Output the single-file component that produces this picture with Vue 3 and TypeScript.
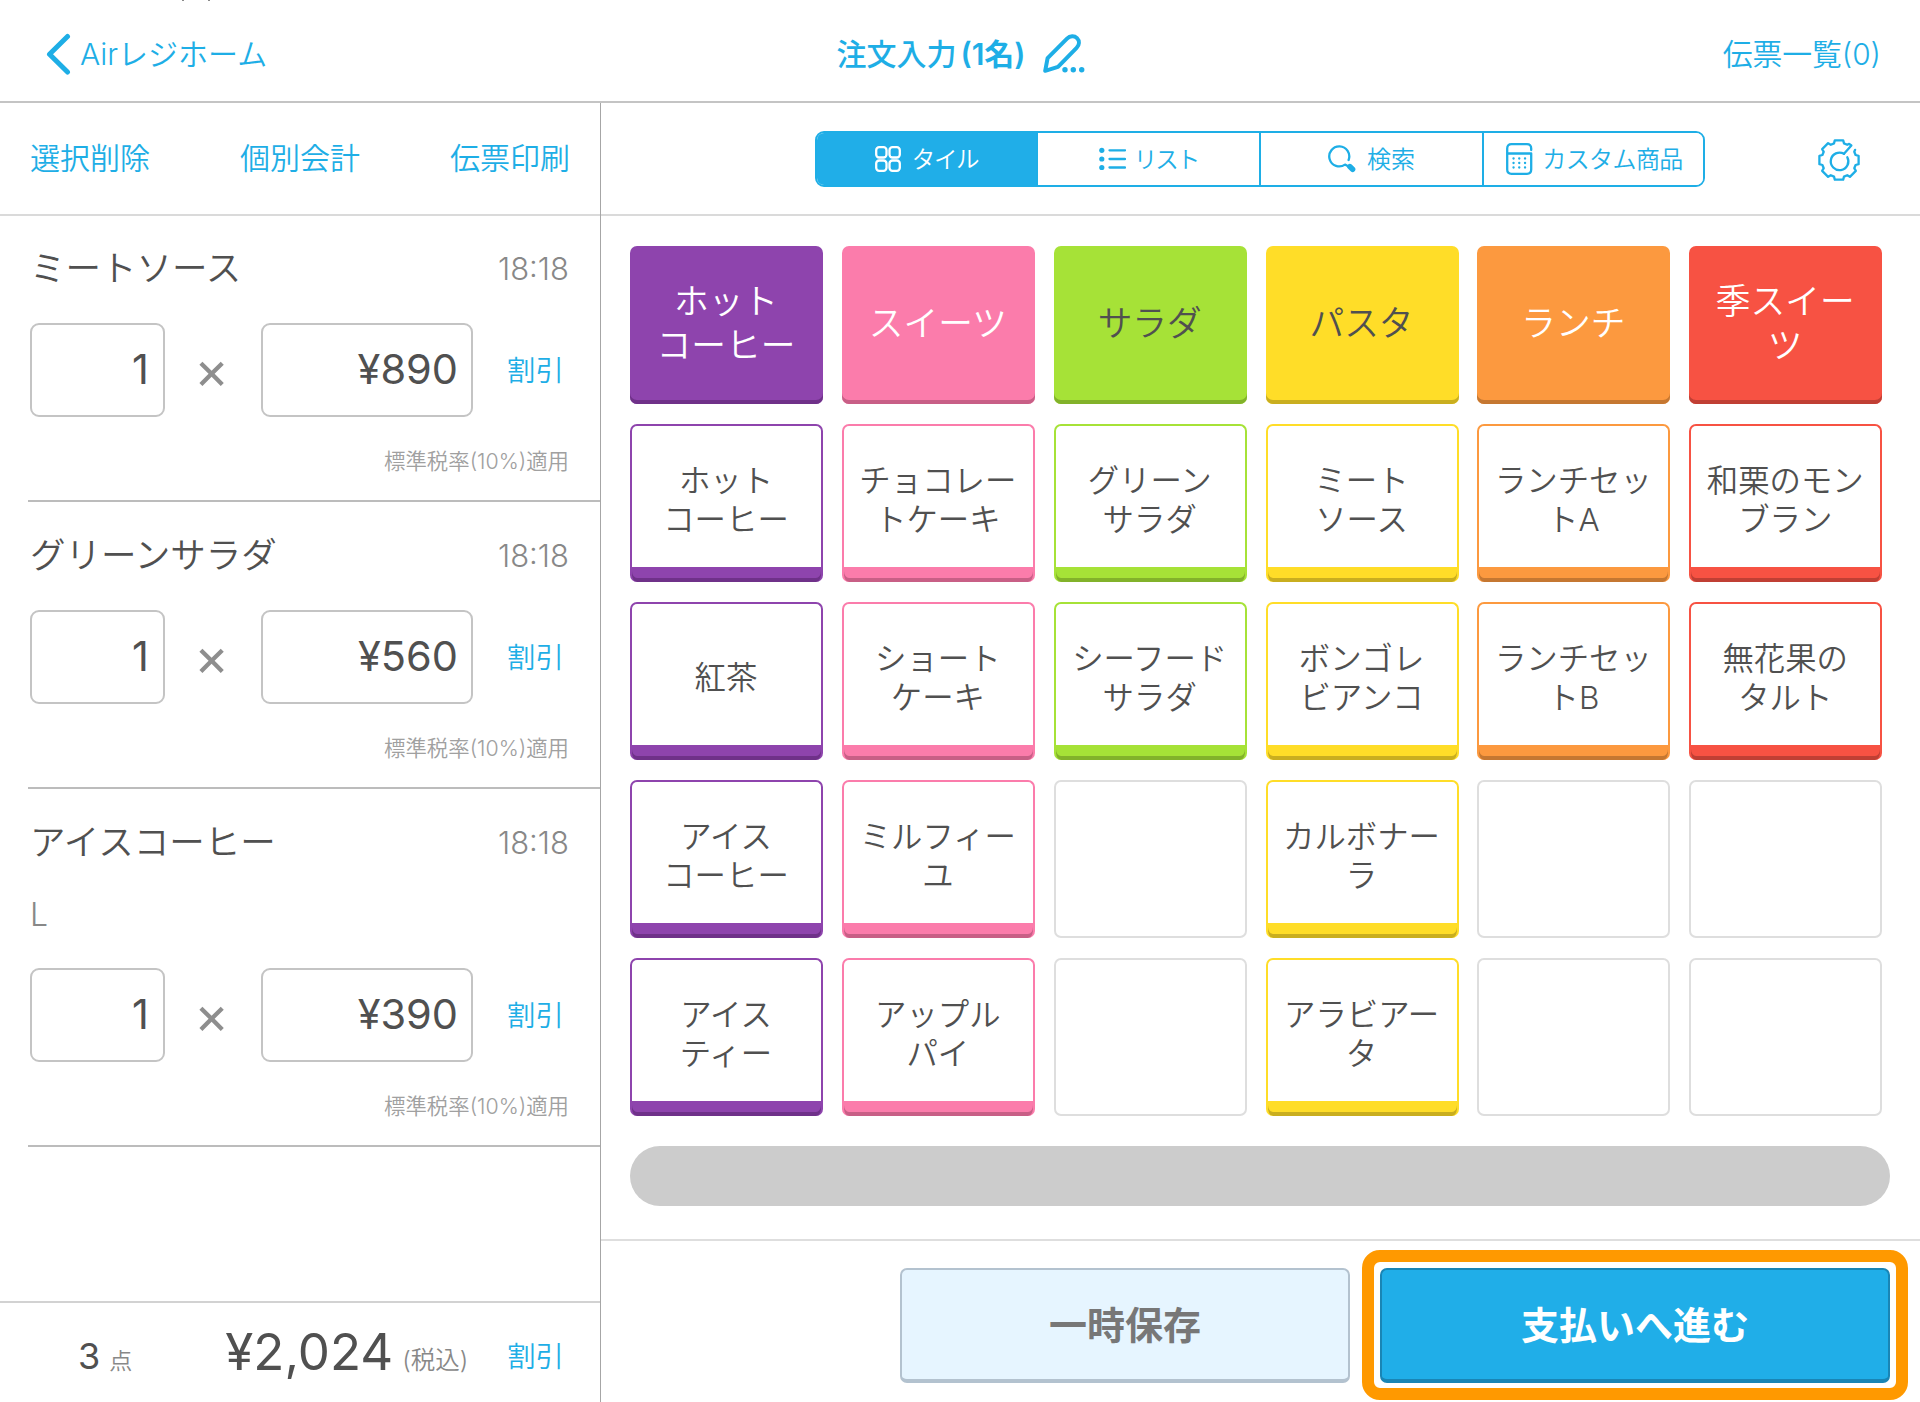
<script setup lang="ts">
interface OrderLine {
  name: string
  time: string
  option?: string
  qty: number
  price: string
}

interface Category {
  color: string
  edge: string
  text: string
  title: string[]
  items: string[][]
}

const orderLines: OrderLine[] = [
  { name: 'ミートソース', time: '18:18', qty: 1, price: '¥890' },
  { name: 'グリーンサラダ', time: '18:18', qty: 1, price: '¥560' },
  { name: 'アイスコーヒー', time: '18:18', option: 'L', qty: 1, price: '¥390' },
]

const categories: Category[] = [
  { color: '#8e44ad', edge: '#6f3189', text: '#fff', title: ['ホット', 'コーヒー'], items: [['ホット', 'コーヒー'], ['紅茶'], ['アイス', 'コーヒー'], ['アイス', 'ティー']] },
  { color: '#fb7cab', edge: '#c85f86', text: '#fff', title: ['スイーツ'], items: [['チョコレー', 'トケーキ'], ['ショート', 'ケーキ'], ['ミルフィー', 'ユ'], ['アップル', 'パイ']] },
  { color: '#a6e237', edge: '#82b22a', text: '#505050', title: ['サラダ'], items: [['グリーン', 'サラダ'], ['シーフード', 'サラダ'], [], []] },
  { color: '#ffdd28', edge: '#c9ae1f', text: '#505050', title: ['パスタ'], items: [['ミート', 'ソース'], ['ボンゴレ', 'ビアンコ'], ['カルボナー', 'ラ'], ['アラビアー', 'タ']] },
  { color: '#fc993f', edge: '#c57731', text: '#fff', title: ['ランチ'], items: [['ランチセッ', 'トA'], ['ランチセッ', 'トB'], [], []] },
  { color: '#f75243', edge: '#c03f34', text: '#fff', title: ['季スイー', 'ツ'], items: [['和栗のモン', 'ブラン'], ['無花果の', 'タルト'], [], []] },
]

const rows = [0, 1, 2, 3]

// Eight-tooth gear, left open at the upper-right tooth where the pointer enters.
function gearPoint(tooth: number, across: number, radius: number): string {
  const a = (tooth * Math.PI) / 4
  const x = 21 + across * Math.cos(a) + radius * Math.sin(a)
  const y = 21 + across * Math.sin(a) - radius * Math.cos(a)
  return `${x.toFixed(2)} ${y.toFixed(2)}`
}

const gearPoints: string[] = [gearPoint(1, 4.2, 18.6), gearPoint(1, 5, 16.6)]
for (let t = 2; t <= 8; t++) {
  gearPoints.push(gearPoint(t, -5, 16.6), gearPoint(t, -4.2, 19.6), gearPoint(t, 4.2, 19.6), gearPoint(t, 5, 16.6))
}
gearPoints.push(gearPoint(1, -5, 16.6), gearPoint(1, -4.2, 18.6), gearPoint(1, -1.5, 19))
const gearPath = `M${gearPoints.join('L')}L26 14.8`
</script>

<template>
  <div class="screen">
    <header class="topbar">
      <a class="back">
        <svg width="26" height="44" viewBox="0 0 26 44"><path d="M22.5 4.5 4.5 22.2 22.5 40" /></svg>
        <span>Airレジホーム</span>
      </a>
      <div class="title">
        <h1>注文入力<span class="count">(1名)</span></h1>
        <svg width="42" height="40" viewBox="0 0 42 40">
          <path d="M2.2 36.8 4.6 24.2 24 4.6c3-3 7.4-3 10-.4s2.6 6.6-.4 9.6L15 32.8Z" />
          <circle cx="22" cy="35.7" r="2.7" /><circle cx="30.3" cy="35.7" r="2.7" /><circle cx="38.7" cy="35.7" r="2.7" />
        </svg>
      </div>
      <a class="slips">伝票一覧(0)</a>
      <i class="tick"></i>
    </header>

    <div class="body">
      <aside class="order">
        <nav class="actions"><a>選択削除</a><a>個別会計</a><a>伝票印刷</a></nav>
        <section class="lines">
          <article v-for="line in orderLines" :key="line.name" class="line">
            <div class="line-head"><span class="name">{{ line.name }}</span><span class="time">{{ line.time }}</span></div>
            <div v-if="line.option" class="option">{{ line.option }}</div>
            <div class="line-values">
              <span class="field qty">{{ line.qty }}</span>
              <span class="times">×</span>
              <span class="field price">{{ line.price }}</span>
              <a class="discount">割引</a>
            </div>
            <div class="tax">標準税率(10%)適用</div>
          </article>
        </section>
        <footer class="total">
          <span class="num">3</span><span class="unit">点</span>
          <span class="sum">¥2,024</span><span class="incl">(税込)</span>
          <a class="discount">割引</a>
        </footer>
      </aside>

      <main class="catalog">
        <div class="toolbar">
          <div class="segments">
            <button class="seg active">
              <svg width="26" height="26" viewBox="0 0 26 26">
                <rect x="1.2" y="1.2" width="10.3" height="10.3" rx="3" /><rect x="14.5" y="1.2" width="10.3" height="10.3" rx="3" />
                <rect x="1.2" y="14.5" width="10.3" height="10.3" rx="3" /><rect x="14.5" y="14.5" width="10.3" height="10.3" rx="3" />
              </svg>
              <span>タイル</span>
            </button>
            <button class="seg list">
              <svg width="27" height="24" viewBox="0 0 27 24">
                <path d="M10.5 3.3H26M10.5 12H26M10.5 20.5H26" />
                <g class="fill"><circle cx="2.8" cy="3.3" r="2.6" /><circle cx="2.8" cy="12" r="2.6" /><circle cx="2.8" cy="20.5" r="2.6" /></g>
              </svg>
              <span>リスト</span>
            </button>
            <button class="seg">
              <svg width="28" height="28" viewBox="0 0 28 28">
                <path d="M20.6 15A10 10 0 1 0 17 19.6L20 21.3" />
                <path d="M21.8 21.6 24.6 24.3" class="grip" />
              </svg>
              <span>検索</span>
            </button>
            <button class="seg custom">
              <svg width="27" height="32" viewBox="0 0 27 32">
                <path d="M25.2 7V5.5Q25.2 1.2 21 1.2H5.5Q1.2 1.2 1.2 5.5V26.5Q1.2 30.8 5.5 30.8H21Q25.2 30.8 25.2 26.5V10.5H1.2" />
                <path d="M7.5 15.5h.1M13.2 15.5h.1M19 15.5h.1M7.5 20h.1M13.2 20h.1M19 20h.1M7.5 24.5h.1M13.2 24.5h.1M19 24.5h.1" />
              </svg>
              <span>カスタム商品</span>
            </button>
          </div>
          <svg class="gear" width="42" height="42" viewBox="0 0 42 42">
            <path :d="gearPath" />
            <path d="M29.3 18.2A8.8 8.8 0 1 1 26 14.8" />
          </svg>
        </div>

        <div class="grid">
          <div v-for="cat in categories" :key="'c' + cat.color" class="tile category" :style="{ '--c': cat.color, '--e': cat.edge, color: cat.text }">
            <span v-for="part in cat.title" :key="part">{{ part }}</span>
          </div>
          <template v-for="row in rows" :key="row">
            <div
              v-for="cat in categories"
              :key="cat.color + row"
              class="tile"
              :class="cat.items[row].length ? 'item' : 'empty'"
              :style="{ '--c': cat.color, '--e': cat.edge }"
            >
              <span v-for="part in cat.items[row]" :key="part">{{ part }}</span>
            </div>
          </template>
        </div>
        <div class="scrollbar"></div>

        <footer class="checkout">
          <button class="btn save">一時保存</button>
          <div class="focus"><button class="btn pay">支払いへ進む</button></div>
        </footer>
      </main>
    </div>
  </div>
</template>

<style>
body { margin: 0; background: #fff; }
</style>

<style scoped>
* { box-sizing: border-box; }
.screen {
  width: 1920px;
  height: 1402px;
  overflow: hidden;
  display: flex;
  flex-direction: column;
  background: #fff;
  color: #505050;
  font-family: Inter, "Noto Sans CJK JP", sans-serif;
  font-weight: 350;
  line-height: 1;
  white-space: nowrap;
}
svg { flex: none; fill: none; stroke: currentColor; stroke-width: 2.3; stroke-linecap: round; stroke-linejoin: round; }
a { color: #1eaee6; }
button { font: inherit; padding: 0; margin: 0; }

.topbar {
  position: relative;
  flex: none;
  height: 103px;
  padding: 6px 39px 0 45px;
  display: grid;
  grid-template-columns: 1fr auto 1fr;
  align-items: center;
  border-bottom: 2px solid #c4c4c4;
  font-size: 30px;
  color: #1eaee6;
}
.tick { position: absolute; left: 182px; top: 0; width: 28px; height: 1px; border: solid #8a8a8a; border-width: 0 2px; }
.back { display: flex; align-items: center; gap: 9px; }
.back svg { stroke-width: 5; }
.title { display: flex; align-items: center; gap: 17px; margin-right: 5px; }
.title h1 { margin: 0; padding-top: 1px; font-size: 30px; font-weight: 500; }
.title .count { margin-left: 4px; font-weight: 600; }
.title svg { stroke-width: 4; }
.title circle { fill: currentColor; stroke: none; }
.slips { justify-self: end; padding-top: 2px; font-size: 29.8px; }

.body { flex: 1; display: flex; min-height: 0; }
.order { width: 601px; flex: none; display: flex; flex-direction: column; border-right: 1px solid #a6a6a6; }
.actions {
  height: 113px;
  flex: none;
  padding: 0 30px 1px 30px;
  display: flex;
  align-items: center;
  justify-content: space-between;
  border-bottom: 2px solid #dadada;
  font-size: 30px;
}
.lines { flex: 1; padding-left: 28px; }
.line { height: 287px; padding: 32px 31px 0 2px; border-bottom: 2px solid #bcbcbc; }
.line:first-child { height: 286px; padding-top: 31px; }
.line:last-child { height: 358px; }
.line-head { display: flex; justify-content: space-between; align-items: center; height: 42px; }
.name { font-size: 35.5px; padding-top: 1px; }
.time { font-size: 31px; color: #888; }
.option { height: 71px; padding-top: 36px; font-size: 32px; color: #888; }
.line-values { display: flex; align-items: center; margin-top: 34px; height: 94px; }
.field {
  height: 94px;
  display: flex;
  align-items: center;
  justify-content: flex-end;
  border: 2px solid #c4c4c4;
  border-radius: 9px;
  font-size: 41.5px;
  font-weight: 370;
  padding: 0 13px 0 0;
}
.qty { width: 135px; padding-right: 14px; }
.price { width: 212px; }
.times { width: 96px; text-align: center; font-size: 53px; font-weight: 400; color: #8e8e8e; padding: 0 3px 0 0; }
.discount { font-size: 28.4px; }
.line-values .discount { margin-left: 34px; padding-top: 2px; }
.tax { margin-top: 33px; font-size: 21.4px; line-height: 22px; text-align: right; color: #a0a0a0; }

.total { height: 101px; flex: none; border-top: 2px solid #d2d2d2; display: flex; align-items: baseline; padding: 0 36px 0 78px; line-height: 99px; }
.num { font-size: 36px; line-height: 97px; font-weight: 370; }
.unit { margin-left: 9px; font-size: 23px; color: #888; }
.sum { margin-left: 93px; font-size: 51px; font-weight: 370; }
.incl { margin-left: 9px; font-size: 24.5px; color: #888; }
.num, .unit, .incl { position: relative; top: -2px; }
.sum { position: relative; top: -1px; }
.total .discount { margin-left: auto; position: relative; top: -4px; }

.catalog { flex: 1; display: flex; flex-direction: column; }
.toolbar { height: 113px; flex: none; border-bottom: 2px solid #dadada; display: flex; align-items: center; padding: 1px 60px 0 214px; justify-content: space-between; color: #1eaee6; }
.gear { margin-top: 1px; }
.segments { width: 890px; height: 56px; display: grid; grid-template-columns: 219px 223px 223px 221px; border: 2px solid #1eaee6; border-radius: 9px; overflow: hidden; }
.seg { display: flex; align-items: center; justify-content: center; gap: 11px; border: 0; border-left: 2px solid #1eaee6; background: #fff; color: #1eaee6; font-size: 24px; }
.seg span { padding-top: 1px; }
.seg.active { border-left: 0; background: #20aee8; color: #fff; }
.seg.active span { font-size: 23.5px; letter-spacing: -1.3px; }
.seg.list { gap: 8px; }
.seg.list span { font-size: 23.5px; letter-spacing: -2px; }
.seg.custom { gap: 9px; padding-left: 2px; }
.seg.custom span { letter-spacing: -0.6px; }
.fill { fill: currentColor; stroke: none; }
.grip { stroke-width: 5.5; }

.grid { margin: 29.5px 0 0 29px; display: grid; grid-template-columns: repeat(6, 193px); grid-auto-rows: 158px; gap: 20px 18.85px; }
.tile { display: flex; flex-direction: column; align-items: center; justify-content: center; border-radius: 7px; font-size: 31.4px; line-height: 39.5px; padding-right: 1px; }
.category { background: var(--c); box-shadow: inset 0 -4px 0 var(--e); font-size: 34.7px; line-height: 44px; padding-bottom: 4px; }
.item { border: 2px solid var(--c); border-bottom-width: 0; padding-bottom: 5px; background: linear-gradient(var(--c), var(--c)) bottom / 100% 14.5px no-repeat; box-shadow: inset 0 -4px 0 var(--e); }
.empty { border: 2px solid #dedede; }
.scrollbar { flex: none; margin: 30px 0 0 29px; width: 1260px; height: 60px; border-radius: 30px; background: #ccc; }

.checkout { margin-top: auto; height: 163px; flex: none; border-top: 2px solid #dedede; display: flex; justify-content: flex-end; gap: 12px; padding: 9px 12px 0 0; }
.btn { border-radius: 7px; font-size: 38px; font-weight: 700; height: 115px; padding: 0; border: 2px solid; border-bottom-width: 4px; }
.save { width: 450px; margin-top: 18px; color: #777; background: #e6f5ff; border-color: #b3c2cf; }
.focus { width: 546px; height: 150px; padding: 6px; border: 12px solid #ff9900; border-radius: 18px; }
.pay { width: 510px; color: #fff; background: #20aee8; border-color: #1985b5; }
</style>
